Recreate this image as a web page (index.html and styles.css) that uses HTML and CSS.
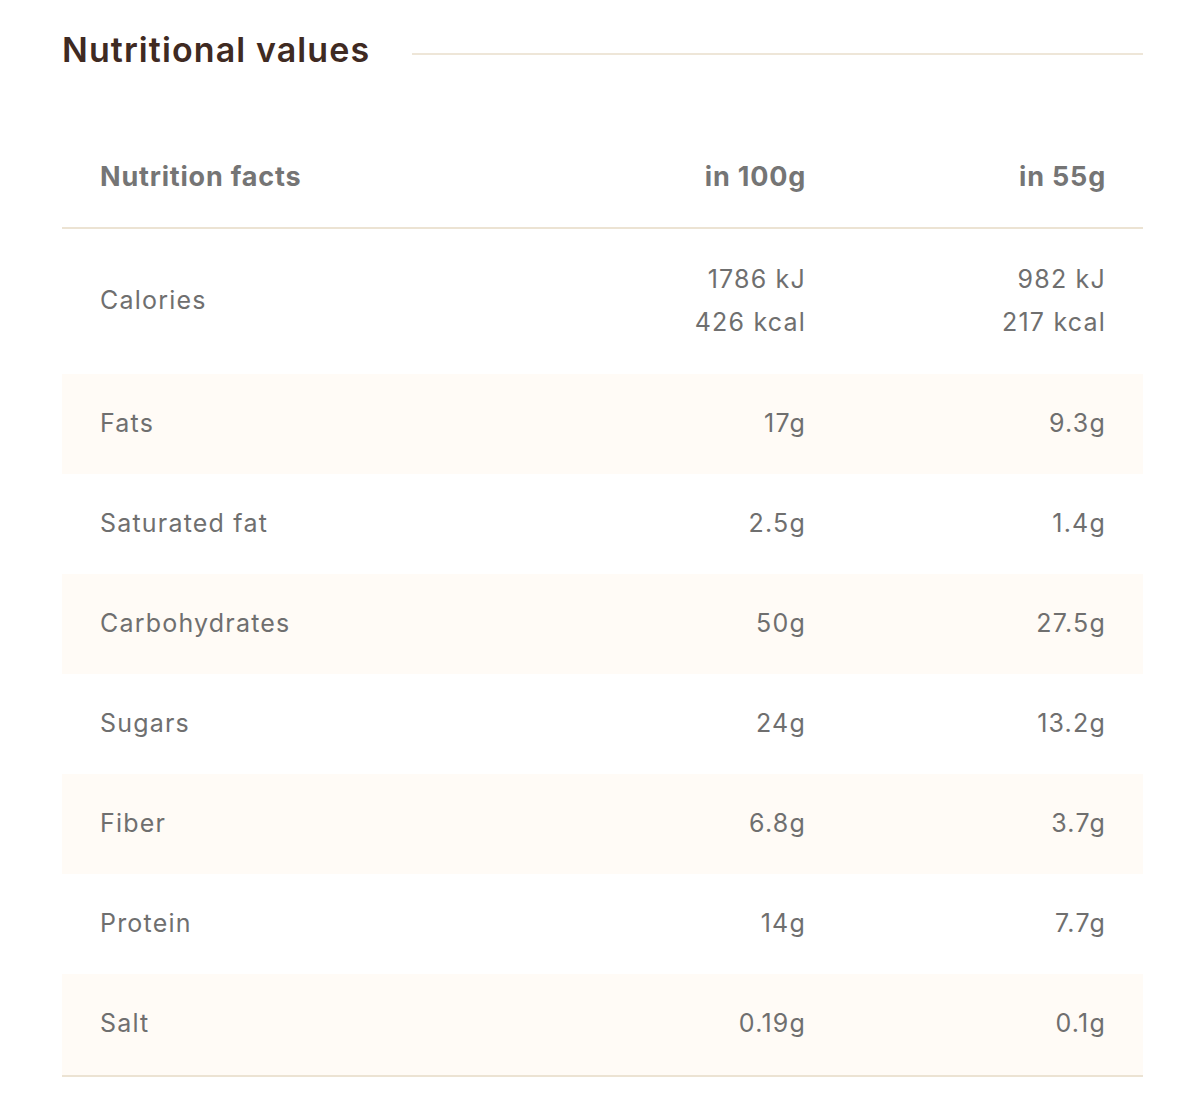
FILE: index.html
```html
<!DOCTYPE html>
<html lang="en">
<head>
<meta charset="utf-8">
<title>Nutritional values</title>
<link rel="stylesheet" href="styles.css">
</head>
<body>
<section class="nutrition">
  <div class="title-row">
    <h2 class="title">Nutritional values</h2>
    <span class="title-line"></span>
  </div>
  <div class="table">
    <div class="row head">
      <div class="cell label">Nutrition facts</div>
      <div class="cell val">in 100g</div>
      <div class="cell val">in 55g</div>
    </div>
    <div class="row calories">
      <div class="cell label">Calories</div>
      <div class="cell val"><span>1786 kJ</span><span>426 kcal</span></div>
      <div class="cell val"><span>982 kJ</span><span>217 kcal</span></div>
    </div>
    <div class="row alt">
      <div class="cell label">Fats</div>
      <div class="cell val">17g</div>
      <div class="cell val">9.3g</div>
    </div>
    <div class="row">
      <div class="cell label">Saturated fat</div>
      <div class="cell val">2.5g</div>
      <div class="cell val">1.4g</div>
    </div>
    <div class="row alt">
      <div class="cell label">Carbohydrates</div>
      <div class="cell val">50g</div>
      <div class="cell val">27.5g</div>
    </div>
    <div class="row">
      <div class="cell label">Sugars</div>
      <div class="cell val">24g</div>
      <div class="cell val">13.2g</div>
    </div>
    <div class="row alt">
      <div class="cell label">Fiber</div>
      <div class="cell val">6.8g</div>
      <div class="cell val">3.7g</div>
    </div>
    <div class="row">
      <div class="cell label">Protein</div>
      <div class="cell val">14g</div>
      <div class="cell val">7.7g</div>
    </div>
    <div class="row alt last">
      <div class="cell label">Salt</div>
      <div class="cell val">0.19g</div>
      <div class="cell val">0.1g</div>
    </div>
  </div>
</section>
</body>
</html>
```
FILE: styles.css
```css
html, body {
  margin: 0;
  padding: 0;
  background: #ffffff;
}
body {
  font-family: Inter, "Noto Sans", sans-serif;
}
.nutrition {
  width: 1081px;
  margin-left: 62px;
  padding-top: 25px;
}
.title-row {
  display: flex;
  align-items: center;
  gap: 42px;
  height: 48px;
}
.title {
  margin: 0;
  font-size: 34px;
  font-weight: 600;
  color: #3f2a22;
  letter-spacing: 1.1px;
  white-space: nowrap;
}
.title-line {
  flex: 1;
  height: 2px;
  background: #eee6d8;
  margin-top: 10px;
}
.table {
  margin-top: 56px;
}
.row {
  display: grid;
  grid-template-columns: 1fr 300px 300px;
  align-items: center;
  height: 100px;
}
.row.head {
  height: 100px;
  border-bottom: 2px solid #ece3d3;
  box-sizing: border-box;
}
.row.calories {
  height: 145px;
}
.row.alt {
  background: #fffbf6;
}
.row.last {
  height: 103px;
  border-bottom: 2px solid #ece3d3;
  box-sizing: border-box;
}
.cell {
  font-size: 25px;
  color: #6f6f6f;
  font-weight: 400;
  letter-spacing: 1.2px;
  padding-bottom: 3px;
}
.label {
  padding-left: 38px;
}
.val {
  padding-right: 37px;
  text-align: right;
  display: flex;
  flex-direction: column;
  align-items: flex-end;
  gap: 13px;
}
.head .cell {
  font-weight: 700;
  color: #757575;
  font-size: 27px;
  letter-spacing: 0.8px;
}
```
